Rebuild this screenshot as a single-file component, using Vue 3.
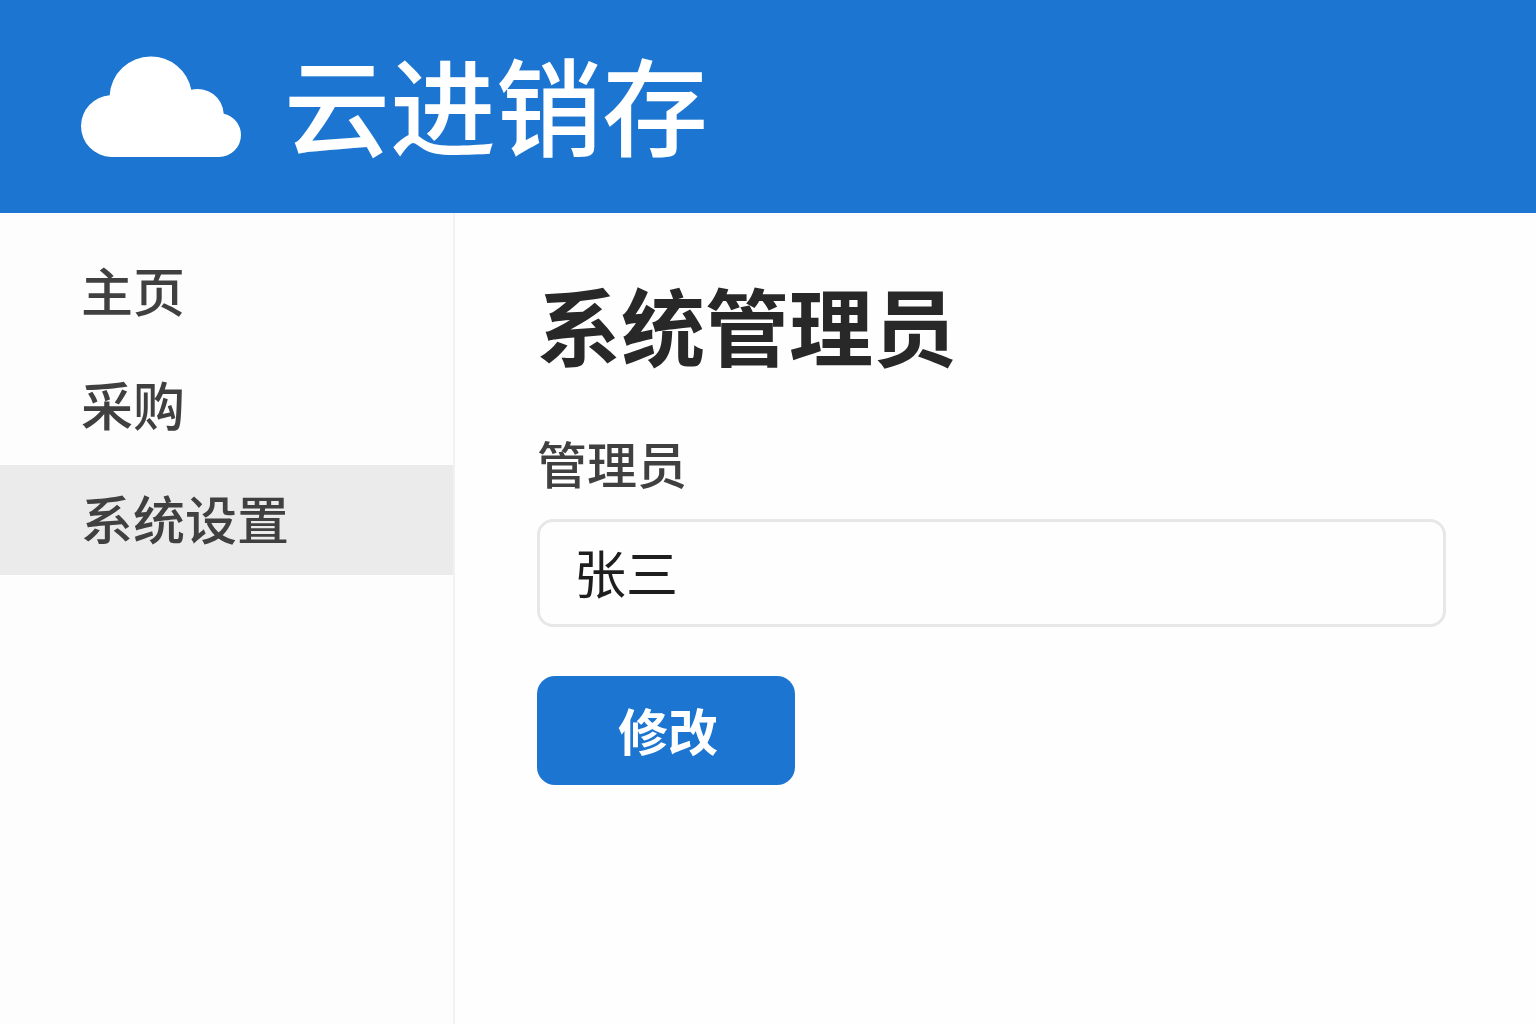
<script setup>
import { ref } from 'vue'

const navItems = ['主页', '采购', '系统设置']
const current = ref('系统设置')
const admin = ref('张三')
</script>

<template>
  <div class="app">
    <header class="header">
      <svg class="logo" viewBox="0 0 164 103" aria-hidden="true">
        <path
          d="M31 102A31 31 0 0 1 1 71A31 31 0 0 1 29.700 40.300A41 41 0 0 1 70.500 1.500A41 41 0 0 1 111.300 34.700A26 26 0 0 1 143.700 58.700A22 22 0 0 1 161 80A22 22 0 0 1 139 102Z"
          fill="#fff"
        />
      </svg>
      <span class="brand">云进销存</span>
    </header>

    <div class="body">
      <nav class="sidebar">
        <a
          v-for="item in navItems"
          :key="item"
          href="#"
          class="nav-item"
          :class="{ active: item === current }"
          @click.prevent="current = item"
        >{{ item }}</a>
      </nav>

      <main class="content">
        <h1 class="title">系统管理员</h1>
        <form class="form" @submit.prevent>
          <label class="label" for="admin">管理员</label>
          <input id="admin" v-model="admin" class="input" type="text" />
          <button class="button" type="submit">修改</button>
        </form>
      </main>
    </div>
  </div>
</template>

<style>
body {
  margin: 0;
}
</style>

<style scoped>
.app {
  display: flex;
  flex-direction: column;
  min-height: 100vh;
  background: #fefefe;
  font-family: "Noto Sans CJK SC", "Noto Sans", sans-serif;
}

.header {
  display: flex;
  align-items: center;
  gap: 40px;
  padding: 32px 80px;
  background: #1d75d2;
}

.logo {
  width: 164px;
  height: 103px;
  flex: none;
}

.brand {
  padding-bottom: 9px;
  color: #fff;
  font-size: 106px;
  font-weight: 500;
  line-height: 140px;
}

.body {
  display: flex;
  flex: 1;
}

.sidebar {
  display: flex;
  flex-direction: column;
  gap: 4px;
  flex: none;
  box-sizing: border-box;
  width: 455px;
  padding-top: 24px;
  border-right: 2px solid #f2f2f2;
  background: #fdfdfd;
}

.nav-item {
  padding: 0 0 4px 81px;
  color: #404040;
  font-size: 52px;
  font-weight: 500;
  line-height: 106px;
  text-decoration: none;
}

.nav-item.active {
  background: #ebebeb;
}

.content {
  flex: 1;
  min-width: 0;
  padding: 56px 90px 60px 82px;
}

.title {
  margin: 0 0 40px;
  color: #282828;
  font-size: 84px;
  font-weight: 700;
  line-height: 110px;
}

.form {
  display: flex;
  flex-direction: column;
  align-items: flex-start;
}

.label {
  margin-bottom: 14px;
  color: #404040;
  font-size: 50px;
  font-weight: 500;
  line-height: 86px;
}

.input {
  box-sizing: border-box;
  width: 100%;
  height: 108px;
  margin-bottom: 49px;
  padding: 0 34px 4px;
  border: 3px solid #e7e7e7;
  border-radius: 16px;
  background: #fefefe;
  color: #1e1e1e;
  font: inherit;
  font-size: 52px;
  outline: none;
}

.button {
  width: 258px;
  height: 109px;
  padding: 0 0 4px 4px;
  border: 0;
  border-radius: 18px;
  background: #1d75d2;
  color: #fff;
  font: inherit;
  font-size: 50px;
  font-weight: 700;
  cursor: pointer;
}
</style>
